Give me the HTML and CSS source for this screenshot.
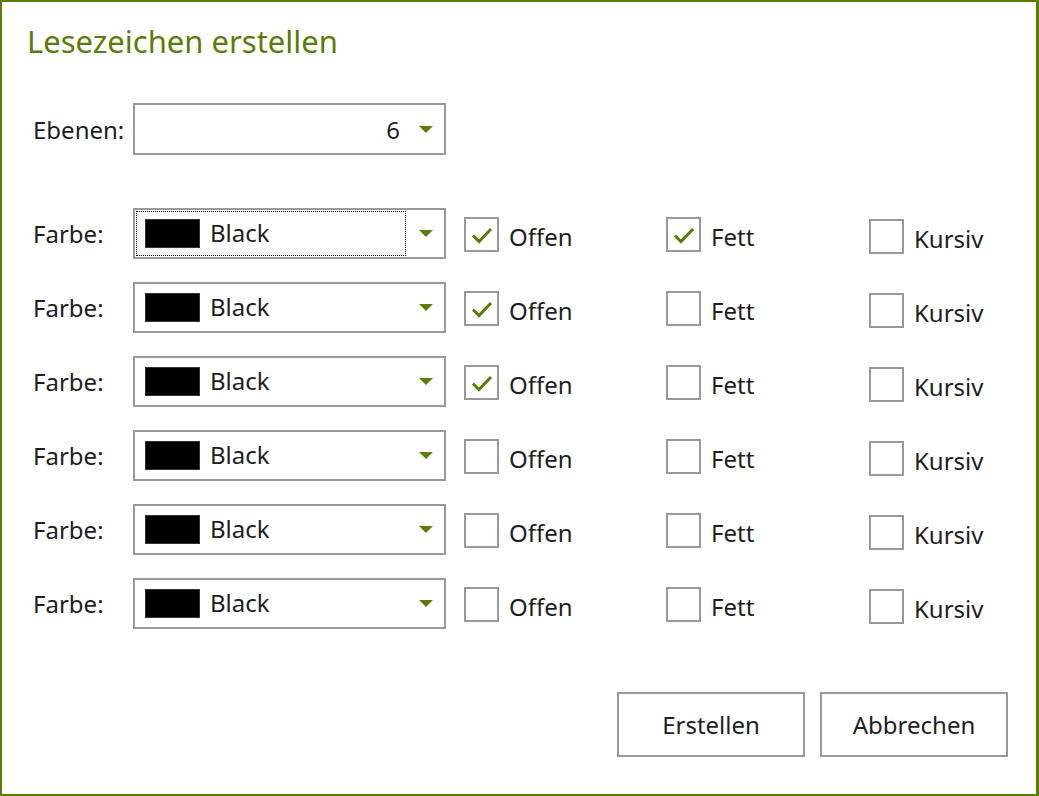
FILE: index.html
```html
<!DOCTYPE html>
<html lang="de">
<head>
    <meta charset="UTF-8">
    <meta name="viewport" content="width=device-width, initial-scale=1.0">
    <title>Lesezeichen erstellen</title>
    <link rel="stylesheet" href="styles.css">
</head>
<body>
    <div class="dialog">
        <h1 class="title">Lesezeichen erstellen</h1>

        <div class="levels">
            <span class="label">Ebenen:</span>
            <div class="combo combo-levels">
                <span class="value">6</span>
                <span class="arrow"></span>
            </div>
        </div>

        <div class="rows" id="rows"></div>

        <div class="buttons">
            <button class="btn">Erstellen</button>
            <button class="btn">Abbrechen</button>
        </div>
    </div>

    <script>
        const rows = [
            { open: true, bold: true, italic: false },
            { open: true, bold: false, italic: false },
            { open: true, bold: false, italic: false },
            { open: false, bold: false, italic: false },
            { open: false, bold: false, italic: false },
            { open: false, bold: false, italic: false }
        ];

        const tick = '<svg width="22" height="18" viewBox="0 0 22 18"><path d="M2 9.5 L8 15.5 L20 3" fill="none" stroke="#5a7d0a" stroke-width="3"/></svg>';

        function checkbox(checked, text, cls) {
            return `<label class="check ${cls}"><span class="box">${checked ? tick : ''}</span><span class="check-text">${text}</span></label>`;
        }

        const container = document.getElementById('rows');
        rows.forEach((r, i) => {
            const row = document.createElement('div');
            row.className = 'row';
            row.innerHTML = `
                <span class="label">Farbe:</span>
                <div class="combo">
                    <div class="combo-inner ${i === 0 ? 'focused' : ''}">
                        <span class="swatch"></span>
                        <span class="color-name">Black</span>
                    </div>
                    <span class="arrow"></span>
                </div>
                ${checkbox(r.open, 'Offen', 'c-open')}
                ${checkbox(r.bold, 'Fett', 'c-bold')}
                ${checkbox(r.italic, 'Kursiv', 'c-italic')}
            `;
            container.appendChild(row);
        });
    </script>
</body>
</html>
```

FILE: styles.css
```css
html, body {
    margin: 0;
    padding: 0;
    background: #fff;
}
body {
    font-family: "Noto Sans", "Open Sans", sans-serif;
    font-size: 24px;
    color: #1e1e1e;
}
.dialog {
    box-sizing: border-box;
    width: 1039px;
    height: 796px;
    border: 2px solid #5a7d00;
    border-right-width: 3px;
    padding: 0 28px 0 31px;
    position: relative;
}
.title {
    margin: 18px 0 0 -6px;
    font-size: 31px;
    font-weight: normal;
    color: #5a7d0a;
    line-height: 42px;
}
.label {
    display: inline-block;
    width: 100px;
}
.levels {
    display: flex;
    align-items: center;
    margin-top: 41px;
}
.combo {
    box-sizing: border-box;
    width: 313px;
    height: 51px;
    border: 2px solid #999;
    display: flex;
    align-items: center;
    padding: 1px 10px 1px 1px;
    background: #fff;
}
.combo-levels {
    height: 52px;
    justify-content: flex-end;
}
.combo-levels .value {
    margin-right: 19px;
}
.arrow {
    width: 0;
    height: 0;
    border-left: 7px solid transparent;
    border-right: 7px solid transparent;
    border-top: 7px solid #5a7d0a;
    margin-left: auto;
    margin-right: 1px;
}
.combo-levels .arrow {
    margin-left: 0;
}
.rows {
    margin-top: 53px;
    display: flex;
    flex-direction: column;
    gap: 23px;
}
.row {
    display: grid;
    grid-template-columns: 100px 331px 202px 203px 1fr;
    align-items: center;
}
.combo-inner {
    box-sizing: border-box;
    width: 270px;
    height: 45px;
    display: flex;
    align-items: center;
    padding-left: 8px;
    border: 1px dotted transparent;
}
.combo-inner.focused {
    border-color: #000;
}
.swatch {
    width: 53px;
    height: 27px;
    background: #000;
    border: 1px solid #333;
    margin-right: 10px;
}
.color-name {
    position: relative;
    top: -1px;
}
.check {
    display: flex;
    align-items: center;
}
.box {
    box-sizing: border-box;
    width: 35px;
    height: 35px;
    border: 2px solid #999;
    display: flex;
    align-items: center;
    justify-content: center;
    margin-right: 10px;
    margin-top: 2px;
}
.box svg {
    display: block;
}
.check-text {
    margin-top: 6px;
}
.c-italic .box {
    margin-top: 6px;
}
.c-italic .check-text {
    margin-top: 10px;
}
.buttons {
    display: flex;
    justify-content: flex-end;
    gap: 15px;
    margin-top: 63px;
}
.btn {
    box-sizing: border-box;
    width: 188px;
    height: 65px;
    border: 2px solid #999;
    background: #fff;
    font-family: inherit;
    font-size: 24px;
    color: #1e1e1e;
    padding: 0;
}
```
